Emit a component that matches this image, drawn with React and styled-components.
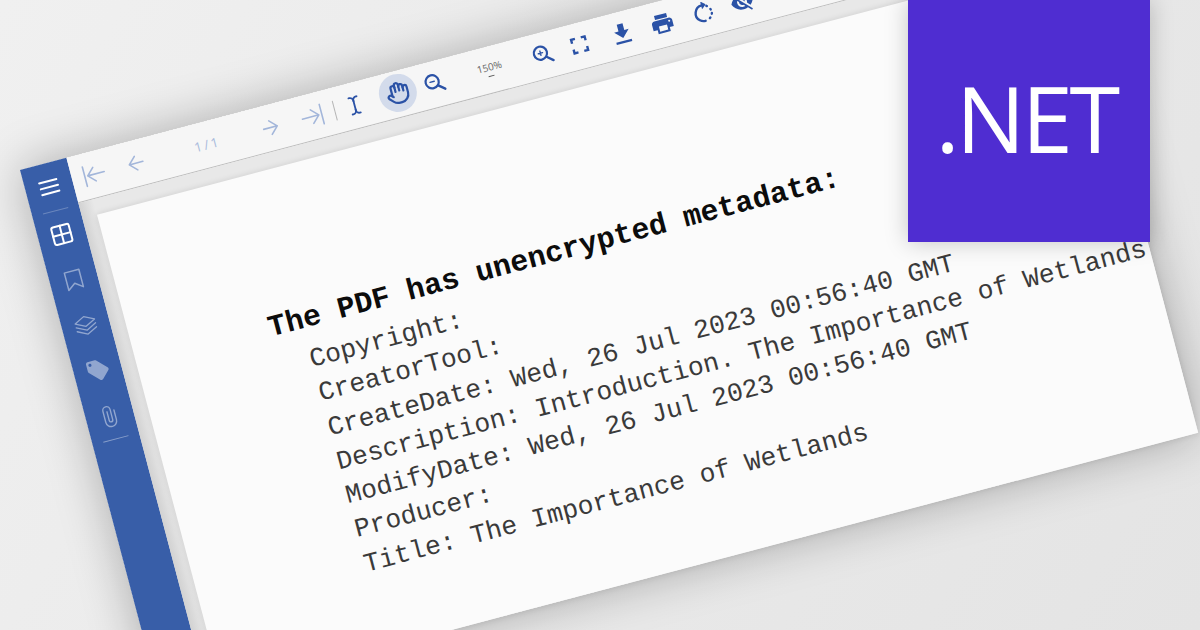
import styled, { createGlobalStyle } from 'styled-components'
import { Grid2x2, Hand, TextCursor } from 'lucide-react'
import { MdLocalOffer, MdPrint, MdVisibilityOff } from 'react-icons/md'

const Reset = createGlobalStyle`
  html, body { margin: 0; padding: 0; overflow: hidden; }
`

const Canvas = styled.div`
  position: relative;
  width: 1200px;
  height: 630px;
  overflow: hidden;
  background: linear-gradient(120deg, #f0f0f0 0%, #e9e9e9 55%, #e4e4e4 100%);
`

const Viewer = styled.div`
  position: absolute;
  left: 20px;
  top: 170px;
  width: 1072px;
  height: 555px;
  display: flex;
  transform: rotate(-14.8deg);
  transform-origin: 0 0;
  box-shadow: 0 0 48px rgba(0, 0, 0, 0.28);
`

const Sidebar = styled.nav`
  width: 48px;
  flex: none;
  background: #385ea8;
  display: flex;
  flex-direction: column;
  align-items: center;
`

const SideHead = styled.div`
  width: 100%;
  height: 48px;
  display: flex;
  align-items: center;
  justify-content: center;
  color: #fff;
`

const SideRule = styled.div`
  width: 26px;
  height: 1px;
  background: rgba(255, 255, 255, ${p => p.$alpha});
`

const SideItem = styled.div`
  width: 100%;
  height: 47px;
  display: flex;
  align-items: center;
  justify-content: center;
  color: ${p => (p.$on ? '#fff' : 'rgba(255, 255, 255, 0.45)')};
`

const Main = styled.div`
  flex: 1;
  display: flex;
  flex-direction: column;
  min-width: 0;
`

const Toolbar = styled.div`
  height: 46px;
  flex: none;
  display: flex;
  align-items: center;
  background: #f6f6f6;
  border-bottom: 1px solid #bdbdbd;
`

const RightTools = styled.div`
  display: flex;
  align-items: center;
  padding-bottom: 2px;
`

const ToolBtn = styled.div`
  width: ${p => p.$w}px;
  height: 38px;
  flex: none;
  display: flex;
  align-items: center;
  justify-content: center;
  color: ${p => (p.$off ? '#a3b6da' : '#2b52a6')};
`

const HandBtn = styled.div`
  width: 38px;
  height: 38px;
  flex: none;
  margin: 0 3px 0 6px;
  border-radius: 50%;
  background: #d3dbeb;
  color: #2b52a6;
  display: flex;
  align-items: center;
  justify-content: center;
`

const Pager = styled.div`
  width: 95px;
  flex: none;
  box-sizing: border-box;
  padding-left: 6px;
  text-align: center;
  font: 13px 'Open Sans', sans-serif;
  word-spacing: -1px;
  color: #a9bbdc;
`

const Divider = styled.div`
  width: 1px;
  height: 20px;
  flex: none;
  background: #b5b5b5;
`

const ZoomLabel = styled.div`
  width: 78px;
  flex: none;
  box-sizing: border-box;
  padding-left: 4px;
  text-align: center;
  font: 10px/12px 'Open Sans', sans-serif;
  color: #666;
`

const ZoomCaret = styled.div`
  width: 6px;
  height: 1px;
  margin: 3px auto 0;
  background: #555;
`

const Gutter = styled.div`
  flex: 1;
  min-height: 0;
  padding: 16px 0 0 15px;
  background: linear-gradient(90deg, #d2d2d2, #e8e8e8 15px);
  display: flex;
`

const Page = styled.main`
  flex: 1;
  background: #fbfbfb;
  padding: 137px 0 0 137px;
  box-shadow: 0 0 6px rgba(0, 0, 0, 0.12);
`

const Heading = styled.div`
  font: bold 29.8px/35px 'Liberation Mono', monospace;
  color: #0c0c0c;
  white-space: pre;
  margin-bottom: 6px;
`

const Field = styled.div`
  font: 26.3px/35.3px 'Liberation Mono', monospace;
  color: #3a3a3a;
  padding-left: 32px;
  white-space: pre;
`

const Badge = styled.div`
  position: absolute;
  top: 0;
  left: 908px;
  width: 242px;
  height: 242px;
  box-sizing: border-box;
  padding: 0 6px 8px 0;
  background: #4f2dd1;
  color: #fff;
  font: 500 92px 'Open Sans', sans-serif;
  letter-spacing: -3.5px;
  display: flex;
  align-items: center;
  justify-content: center;
  box-shadow: 0 0 22px rgba(0, 0, 0, 0.22);
`

const line = { fill: 'none', stroke: 'currentColor', strokeLinecap: 'round', strokeLinejoin: 'round' }

const MenuIcon = () => (
  <svg width="20" height="18" viewBox="0 0 20 18" {...line} strokeWidth="2">
    <path d="M1 3h18M1 9h18M1 15h18" />
  </svg>
)

const BookmarkIcon = () => (
  <svg width="20" height="22" viewBox="0 0 20 22" {...line} strokeWidth="1.5">
    <path d="M2.5 2h15v18L10 14.5 2.5 20z" />
  </svg>
)

const LayersIcon = () => (
  <svg width="24" height="22" viewBox="0 0 24 22" {...line} strokeWidth="1.3">
    <path d="M12 2 22 7l-10 5L2 7z" />
    <path d="m2 11 10 5 10-5M2 15l10 5 10-5" />
  </svg>
)

const ClipIcon = () => (
  <svg width="16" height="24" viewBox="0 0 16 24" {...line} strokeWidth="1.4">
    <path d="M13.5 7v10a5.5 5.5 0 0 1-11 0V5.5a3.7 3.7 0 0 1 7.4 0V16a1.8 1.8 0 0 1-3.6 0V7" />
  </svg>
)

const FirstIcon = () => (
  <svg width="24" height="24" viewBox="0 0 24 24" {...line} strokeWidth="1.6">
    <path d="M3 2v20M23 12H6M13 5l-7 7 7 7" />
  </svg>
)

const PrevIcon = () => (
  <svg width="18" height="18" viewBox="0 0 18 18" {...line} strokeWidth="1.6">
    <path d="M16 9H2M9 2 2 9l7 7" />
  </svg>
)

const NextIcon = () => (
  <svg width="18" height="18" viewBox="0 0 18 18" {...line} strokeWidth="1.6">
    <path d="M2 9h14M9 2l7 7-7 7" />
  </svg>
)

const LastIcon = () => (
  <svg width="24" height="24" viewBox="0 0 24 24" {...line} strokeWidth="1.6">
    <path d="M21 2v20M1 12h17M11 5l7 7-7 7" />
  </svg>
)

const ZoomIcon = ({ plus }) => (
  <svg width="22" height="22" viewBox="0 0 22 22" {...line} strokeWidth="2.2">
    <circle cx="9" cy="9" r="6.6" />
    <path d="m14 14 6 5" strokeWidth="2.4" />
    <path d={plus ? 'M6.8 9h4.4M9 6.8v4.4' : 'M6.8 9h4.4'} strokeWidth="1.4" />
  </svg>
)

const FitIcon = () => (
  <svg width="18" height="18" viewBox="0 0 18 18" fill="none" stroke="currentColor" strokeWidth="2.4">
    <path d="M6 2H2v4M12 2h4v4M2 12v4h4M16 12v4h-4" />
  </svg>
)

const DownloadIcon = () => (
  <svg width="20" height="22" viewBox="0 0 20 22">
    <path fill="currentColor" d="M7 1h6v7h4.5L10 15.5 2.5 8H7z" />
    <rect fill="currentColor" x="2" y="18.4" width="16" height="2.2" />
  </svg>
)

const RotateIcon = () => (
  <svg width="22" height="22" viewBox="0 0 22 22" {...line} strokeWidth="2.4">
    <path d="M11 4a8 8 0 0 0-5.4 13.9 8 8 0 0 0 5.4 2" />
    <path d="M11 1 14.4 4 11 7z" fill="currentColor" strokeWidth="1" />
    <path d="M15.5 5.6 16 6M18.6 9.6l.2.6M19 14l-.2.6M16.4 17.9l-.6.5" />
  </svg>
)

export default function App() {
  return (
    <Canvas>
      <Reset />
      <Viewer>
        <Sidebar>
          <SideHead><MenuIcon /></SideHead>
          <SideRule $alpha={0.25} />
          <SideItem $on><Grid2x2 size={24} strokeWidth={2} /></SideItem>
          <SideItem><BookmarkIcon /></SideItem>
          <SideItem><LayersIcon /></SideItem>
          <SideItem><MdLocalOffer size={25} /></SideItem>
          <SideItem><ClipIcon /></SideItem>
          <SideRule $alpha={0.4} />
        </Sidebar>
        <Main>
          <Toolbar>
            <ToolBtn $w={44} $off><FirstIcon /></ToolBtn>
            <ToolBtn $w={44} $off><PrevIcon /></ToolBtn>
            <Pager>1 / 1</Pager>
            <ToolBtn $w={44} $off><NextIcon /></ToolBtn>
            <ToolBtn $w={44} $off><LastIcon /></ToolBtn>
            <Divider />
            <ToolBtn $w={40}><TextCursor size={20} strokeWidth={2.2} /></ToolBtn>
            <RightTools>
              <HandBtn><Hand size={24} strokeWidth={2.2} /></HandBtn>
              <ToolBtn $w={32}><ZoomIcon /></ToolBtn>
              <ZoomLabel>150%<ZoomCaret /></ZoomLabel>
              <ToolBtn $w={36}><ZoomIcon plus /></ToolBtn>
              <ToolBtn $w={40}><FitIcon /></ToolBtn>
              <ToolBtn $w={48}><DownloadIcon /></ToolBtn>
              <ToolBtn $w={35}><MdPrint size={25} /></ToolBtn>
              <ToolBtn $w={50}><RotateIcon /></ToolBtn>
              <ToolBtn $w={30}><MdVisibilityOff size={24} /></ToolBtn>
            </RightTools>
          </Toolbar>
          <Gutter>
            <Page>
              <Heading>The PDF has unencrypted metadata:</Heading>
              <Field>Copyright:</Field>
              <Field>CreatorTool:</Field>
              <Field>CreateDate: Wed, 26 Jul 2023 00:56:40 GMT</Field>
              <Field>Description: Introduction. The Importance of Wetlands</Field>
              <Field>ModifyDate: Wed, 26 Jul 2023 00:56:40 GMT</Field>
              <Field>Producer:</Field>
              <Field>Title: The Importance of Wetlands</Field>
            </Page>
          </Gutter>
        </Main>
      </Viewer>
      <Badge>.NET</Badge>
    </Canvas>
  )
}
